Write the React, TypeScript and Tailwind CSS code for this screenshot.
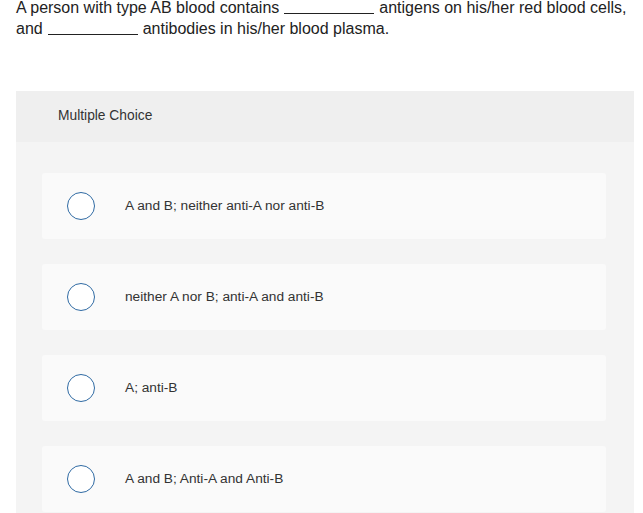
const options = [
  'A and B; neither anti-A nor anti-B',
  'neither A nor B; anti-A and anti-B',
  'A; anti-B',
  'A and B; Anti-A and Anti-B',
];

function Blank() {
  return <span className="inline-block w-[90px] border-b border-[#222] align-baseline mx-[5px] translate-y-[1px]" />;
}

export default function App() {
  return (
    <div className="w-[643px] h-[513px] overflow-hidden bg-white font-['Liberation_Sans',Arial,sans-serif] text-[#222]">
      {/* Question */}
      <p className="px-4 -mt-[3px] text-[16px] leading-[21px]">
        A person with type AB blood contains<Blank />antigens on his/her red blood cells, and<Blank />antibodies in his/her blood plasma.
      </p>

      {/* Answer panel */}
      <div className="ml-4 mt-[52px] w-[618px] bg-[#f4f4f4] pb-10">
        <div className="h-[51px] bg-[#efefef] pl-[42px] flex items-center text-[13.8px] text-[#333]">
          Multiple Choice
        </div>
        <div className="flex flex-col gap-[25px] pt-[31px] pl-[26px] pr-[28px]">
          {options.map((o) => (
            <div key={o} className="h-[66px] rounded-[3px] bg-[#fafafa] flex items-center pl-[25px]">
              <span className="w-[28px] h-[28px] rounded-full border-[1.5px] border-[#2f6aa3] bg-white shrink-0" />
              <span className="ml-[30px] text-[13.7px] text-[#333]">{o}</span>
            </div>
          ))}
        </div>
      </div>
    </div>
  );
}
